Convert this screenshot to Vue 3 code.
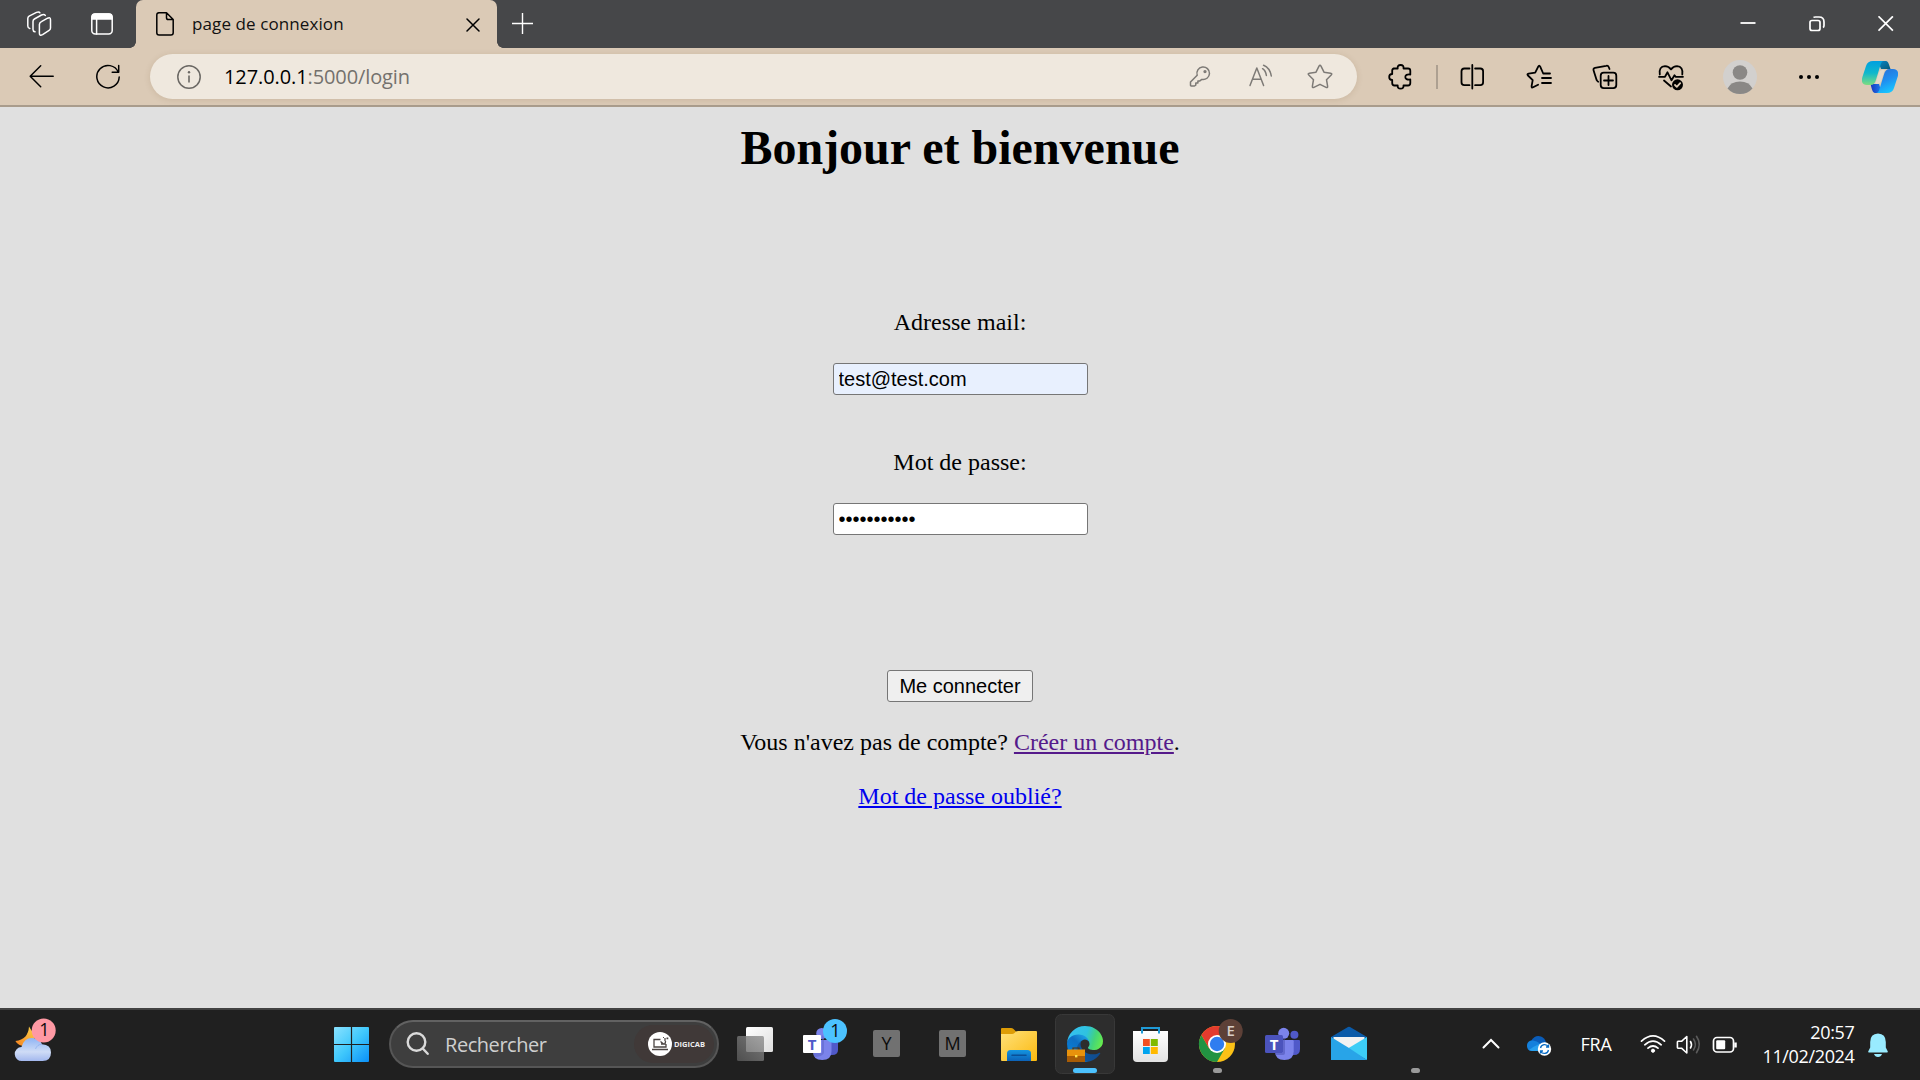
<script setup>
import { ref } from 'vue'

const email = ref('test@test.com')
const password = ref('motdepasse1')
</script>

<template>
  <div class="screen">
    <header class="tabstrip">
      <div class="slot ws">
        <svg width="26" height="26" viewBox="0 0 26 26" class="line light">
          <path d="M15.400 10.600 21.600 7.200q2.900-1.300 2.900 1.500V17q0 1.600-1.400 2.400l-6.500 4.300q-3.200 1.600-3.200-1.500v-8.600q0-2 2-3z" />
          <path d="M9 20.800q-2-.4-2-2.400v-8q0-1.600 1.400-2.400L15.500 4q2.600-1.200 3.800.4" />
          <path d="M3.800 17.400q-2-.5-2-2.500V7.500q0-1.500 1.300-2.300L10.500 1.400q2.600-1 3.400.4" />
        </svg>
      </div>
      <div class="slot ta">
        <svg width="24" height="24" viewBox="0 0 24 24" class="line light">
          <rect x="1.800" y="2" width="20.400" height="20" rx="3.500" />
          <path d="M2 4.500Q2.200 2 5 2h14q2.800 0 3 2.500V7H2z" fill="#fff" />
          <path d="M6.600 7v15" />
        </svg>
      </div>
      <div class="tab">
        <svg class="doc line dark" width="20" height="26" viewBox="0 0 20 26">
          <path d="M3.500 1.800h8L18.200 8.500v13.200q0 2.300-2.300 2.300H4.100q-2.300 0-2.300-2.300V4q0-2.200 2.200-2.200zM11.500 2v4.700q0 1.800 1.800 1.800H18" />
        </svg>
        <span class="tab-title">page de connexion</span>
        <svg class="line dark tab-close" width="14" height="14" viewBox="0 0 14 14"><path d="M1 1l12 12M13 1 1 13" /></svg>
      </div>
      <svg class="plus" width="22" height="22" viewBox="0 0 22 22"><path d="M10.500 0v21M0 10.500h21" stroke="#fff" stroke-width="1.400" /></svg>
      <div class="controls">
        <div><svg width="16" height="16" viewBox="0 0 16 16"><path d="M.5 7h15" stroke="#fff" stroke-width="1.800" /></svg></div>
        <div>
          <svg width="16" height="16" viewBox="0 0 16 16" fill="none" stroke="#fff" stroke-width="1.700">
            <rect x="1" y="4.500" width="10" height="10" rx="2" /><path d="M4.500 1.500Q5 1 6.500 1H10q5 0 5 5v3.500q0 1.500-1 2" />
          </svg>
        </div>
        <div><svg width="16" height="16" viewBox="0 0 16 16"><path d="M.5.300l14.400 14.400M14.900.300.5 14.700" stroke="#fff" stroke-width="1.700" /></svg></div>
      </div>
    </header>

    <nav class="toolbar">
      <div class="tool"><svg class="line dark" width="26" height="26" viewBox="0 0 26 26"><path d="M24.200 12.200H1.700M11.700 1.700 1.200 12.200l10.500 10.500" /></svg></div>
      <div class="tool">
        <svg class="line dark" width="26" height="26" viewBox="0 0 26 26"><path d="M23.300 8.200A11.200 11.200 0 1 0 24.200 13M23.700 1.500v6.700h-6.500" /></svg>
      </div>
      <div class="address">
        <svg class="info" width="26" height="26" viewBox="0 0 26 26">
          <circle cx="13" cy="13" r="11.200" fill="none" stroke="#6b6864" stroke-width="1.500" />
          <path d="M13 11.500v7" stroke="#6b6864" stroke-width="1.600" /><circle cx="13" cy="8.200" r="1.200" fill="#6b6864" />
        </svg>
        <span class="url">127.0.0.1<span class="path">:5000/login</span></span>
        <div class="address-tools">
          <div>
            <svg class="line grey" width="24" height="24" viewBox="0 0 24 24">
              <path d="M9.200 11.200a6.300 6.300 0 1 1 4.600 4.200l-1.900 1.500h-2v2.200H7.800v2L6.500 22H3.200q-.7 0-.7-.7v-3.200z" transform="translate(0 -1)" /><circle cx="17" cy="6.600" r=".9" />
            </svg>
          </div>
          <div>
            <svg class="line grey" width="26" height="26" viewBox="0 0 26 26">
              <path d="M3 21.500 9.800 4l6.800 17.500M5.600 15.200H14M15.600 4.700q3 1.900 3.800 6.800M16.600 1.300q6.400 2.700 7.700 10.700" />
            </svg>
          </div>
          <div>
            <svg class="line grey" width="26" height="26" viewBox="0 0 26 26">
              <path d="M12 2.100q1-1.800 2 0l3 6.100 6.600 1q2 .4.600 1.800l-4.700 4.700 1.100 6.500q.2 2-1.500 1.100L13 20.300l-6.100 3q-1.700.9-1.500-1.100l1.100-6.500-4.700-4.700q-1.400-1.400.6-1.800l6.600-1z" />
            </svg>
          </div>
        </div>
      </div>
      <div class="tool puzzle">
        <svg class="line dark thick" width="26" height="26" viewBox="0 0 26 26">
          <path d="M5.500 4.500h4.200q-.5-3.500 2.900-3.500t2.900 3.500H20q2.300 0 2.300 2.200v3.800q-5-.5-5 2.500t5 2.500V19q0 2.500-2.300 2.500h-4.500q.3 3.200-2.900 3.200t-2.900-3.200H6.500q-2.300 0-2.300-2.500v-3q-3 0-3-3t3-3V6.500q0-2 2.300-2" />
        </svg>
      </div>
      <i class="divider"></i>
      <div class="tool">
        <svg class="line dark thick" width="26" height="26" viewBox="0 0 26 26">
          <path d="M12.300 1v23.500M9.500 4.500H4.300q-2.800 0-2.800 2.800v11q0 2.900 2.800 2.900h5.200M15.100 4.500h5.200q2.800 0 2.800 2.800v11q0 2.900-2.800 2.900h-5.200" />
        </svg>
      </div>
      <div class="tool">
        <svg class="line dark thick" width="26" height="26" viewBox="0 0 26 26">
          <path d="M24.500 10h-6.800l-3-6.800q-1-2-2 0L9.700 9.200l-6.600 1q-2 .4-.6 1.800l4.700 4.700-1.100 6q-.2 2 1.500 1.100l5-2.600M16.500 14.500h9M16.500 19.500h9" transform="translate(-.5 -.5)" />
        </svg>
      </div>
      <div class="tool">
        <svg class="line dark thick" width="26" height="26" viewBox="0 0 26 26">
          <rect x="8.700" y="8.700" width="15.600" height="15.400" rx="3" /><path d="M16.500 12v9M12 16.500h9M17.500 5l-.8-2q-.7-1.700-2.500-1.200L3 3.900q-2 .5-1.400 2.500l3.100 9.800q.5 1 1.500 1.500" />
        </svg>
      </div>
      <div class="tool">
        <svg class="line dark thick" width="26" height="28" viewBox="0 0 26 28">
          <path d="M1.800 11.500Q.6 3.500 7 3.100q3.700 0 6 3.300 2.300-3.300 6-3.300 6.400.4 5.300 8.400M1 13.800h6l2.500-4.500 4 8 3-5 1.300 1.500H25M6 17.500l7 6" />
          <circle cx="19.500" cy="21.800" r="5.500" fill="#000" stroke="none" /><path class="tick" d="m17 22 1.800 1.800 3.400-3.600" />
        </svg>
      </div>
      <div class="tool avatar">
        <svg width="34" height="34" viewBox="0 0 34 34">
          <circle cx="17" cy="17" r="17" fill="#d2d0ce" /><circle cx="17" cy="12.500" r="7.300" fill="#8a8886" />
          <path d="M4.500 28.400Q8 21.500 17 21.500t12.500 6.900Q24.500 34 17 34T4.500 28.400z" fill="#8a8886" />
        </svg>
      </div>
      <div class="tool"><svg width="22" height="6" viewBox="0 0 22 6"><circle cx="3" cy="3" r="2" /><circle cx="11" cy="3" r="2" /><circle cx="19" cy="3" r="2" /></svg></div>
      <div class="tool copilot">
        <svg width="36" height="32" viewBox="0 0 36 32">
          <defs>
            <linearGradient id="cpA" x1="0" y1="0" x2="0" y2="1"><stop offset="0" stop-color="#009fe0" /><stop offset=".5" stop-color="#10b8cc" /><stop offset="1" stop-color="#7ddd80" /></linearGradient>
            <linearGradient id="cpB" x1=".2" y1="0" x2=".6" y2="1"><stop offset="0" stop-color="#2870d8" /><stop offset=".5" stop-color="#1f8ff0" /><stop offset="1" stop-color="#18c8ff" /></linearGradient>
            <linearGradient id="cpC" x1="0" y1="0" x2="1" y2="1"><stop offset="0" stop-color="#0a86c8" /><stop offset="1" stop-color="#075a78" /></linearGradient>
            <linearGradient id="cpD" x1="0" y1="0" x2="1" y2="0"><stop offset="0" stop-color="#1838c0" /><stop offset="1" stop-color="#1f80ee" /></linearGradient>
          </defs>
          <path d="M16 0h7c3 0 3.500 2 4.300 4.500L28.500 8H19z" fill="url(#cpC)" />
          <path d="M20 32h-6c-3 0-3.500-2-4.300-4.500L8.500 23H17z" fill="url(#cpD)" />
          <path d="M11 0h11c-2 0-3 2-3.500 4l-4.600 15c-.8 3-2.500 5-5.500 5H5c-4.500 0-6-3-4.600-8L4 5C5 1.500 7.500 0 11 0z" fill="url(#cpA)" />
          <path d="M25 32H14c2 0 3-2 3.500-4l4.600-15c.8-3 2.500-5 5.500-5H31c4.500 0 6 3 4.600 8L32 27c-1 3.500-3.500 5-7 5z" fill="url(#cpB)" />
          <path d="M20.500 9h2.200l-3.400 10.500q-1 3.500-4.500 3.500h-1.500l3.500-11q.9-3 3.700-3z" fill="#e6d9c8" />
        </svg>
      </div>
    </nav>

    <main class="page">
      <h1>Bonjour et bienvenue</h1>
      <form class="login" @submit.prevent>
        <label for="mail">Adresse mail:</label>
        <input id="mail" v-model="email" class="filled" type="text" />
        <label for="pass" class="second">Mot de passe:</label>
        <input id="pass" v-model="password" type="password" />
        <button type="submit">Me connecter</button>
      </form>
      <p>Vous n'avez pas de compte? <a class="visited" href="#">Créer un compte</a>.</p>
      <p><a href="#">Mot de passe oublié?</a></p>
    </main>

    <footer class="taskbar">
      <svg class="weather" width="66" height="70" viewBox="0 0 66 70">
        <defs>
          <linearGradient id="moon" x1="0" y1="1" x2="1" y2="0"><stop offset="0" stop-color="#f58220" /><stop offset="1" stop-color="#fcd34a" /></linearGradient>
          <linearGradient id="cloud" x1="0" y1="0" x2="0" y2="1"><stop offset="0" stop-color="#8fb4f4" /><stop offset=".6" stop-color="#cfdcf6" /><stop offset="1" stop-color="#a3b8ee" /></linearGradient>
        </defs>
        <path d="M29 16.500q-.8 13-13.600 14.500Q18 36 25 36q9 0 10-10z" fill="url(#moon)" />
        <path d="M22 51a7 7 0 0 1-.5-14Q24 28 32 28q7.500 0 10 6.200 9 .3 9 8.300 0 8.500-8.500 8.500z" fill="url(#cloud)" />
        <path d="M35.500 39q1.500-4.500 6.500-4.800" stroke="#83a6ec" fill="none" opacity=".6" />
        <circle cx="43.700" cy="20.500" r="12" fill="#ff99a4" /><text x="44.500" y="26" class="badge">1</text>
      </svg>
      <svg class="start" width="67" height="70" viewBox="0 0 67 70">
        <defs><linearGradient id="win" gradientUnits="userSpaceOnUse" x1="16" y1="17" x2="51" y2="52"><stop offset="0" stop-color="#8ae2ff" /><stop offset=".5" stop-color="#40c8fc" /><stop offset="1" stop-color="#0a90f8" /></linearGradient></defs>
        <path fill="url(#win)" d="M17 17h15.900v16.900H16V18q0-1 1-1zM34.100 17H50q1 0 1 1v15.900H34.100zM16 35.100h16.900V52H17q-1 0-1-1zM34.100 35.100H51V51q0 1-1 1H34.100z" />
      </svg>
      <div class="search">
        <svg width="24" height="26" viewBox="0 0 24 26" fill="none" stroke="#dadada" stroke-width="2.400" stroke-linecap="round"><circle cx="10.500" cy="11" r="8.800" /><path d="m17 17.800 4.700 5" /></svg>
        <span>Rechercher</span>
        <div class="brand">
          <svg width="24" height="24" viewBox="0 0 24 24">
            <circle cx="12" cy="12" r="12" fill="#fff" />
            <path d="M12.500 7.500H6v7.500h12v-3M4 17.500h16M12.500 9.500l3 2.500M17 6v3M13 12h4l.6-3" fill="none" stroke="#4b4543" stroke-width="1.300" /><path d="M18.500 5.500h1.800v1.800h-1.800zM15 5h1v1h-1z" fill="#4b4543" />
          </svg>
          <b>DIGICAB</b>
        </div>
      </div>

      <svg class="app first" width="66" height="70" viewBox="0 0 66 70">
        <defs>
          <linearGradient id="tv1" x1="0" y1="0" x2="1" y2="1"><stop offset="0" stop-color="#fff" /><stop offset="1" stop-color="#dedede" /></linearGradient>
          <linearGradient id="tv2" x1="1" y1="0" x2="0" y2="1"><stop offset="0" stop-color="#8f8f8f" /><stop offset="1" stop-color="#5a5a5a" /></linearGradient>
        </defs>
        <rect x="24" y="17" width="27" height="25" rx="1.500" fill="url(#tv1)" /><rect x="15" y="26" width="27" height="25" rx="1.500" fill="url(#tv2)" opacity=".8" />
      </svg>
      <svg class="app" width="66" height="70" viewBox="0 0 66 70">
        <circle cx="33.700" cy="23.500" r="5.500" fill="#7b83eb" />
        <path d="M40 31h10v9q0 5-6 5h-4z" fill="#5059c9" /><path d="M25 30h18.500v11.500q0 8.500-9.300 8.500T25 41.500z" fill="#7b83eb" />
        <path d="M34 25v18H26v4q8 0 10-4V27z" fill="#5a62c4" opacity=".5" />
        <rect x="15" y="25" width="18" height="18" rx="1" fill="#fff" /><text x="24" y="39.500" class="tee" fill="#5059c9">T</text>
        <circle cx="47" cy="21" r="12" fill="#4cc2ff" /><text x="47.500" y="27" class="badge">1</text>
      </svg>
      <svg v-for="l in ['Y', 'M']" :key="l" class="app" width="66" height="70" viewBox="0 0 66 70">
        <rect x="19" y="20" width="27" height="27" rx="2" fill="#717171" /><text x="32.500" y="40" class="badge">{{ l }}</text>
      </svg>
      <svg class="app" width="66" height="70" viewBox="0 0 66 70">
        <defs>
          <linearGradient id="fo" x1="0" y1="0" x2="1" y2="1"><stop offset="0" stop-color="#ffe17a" /><stop offset="1" stop-color="#fbb90f" /></linearGradient>
          <linearGradient id="fb" x1="0" y1="0" x2="0" y2="1"><stop offset="0" stop-color="#1495e0" /><stop offset="1" stop-color="#0c62b8" /></linearGradient>
        </defs>
        <path d="M16 18h9q1.500 0 2.500 1l3 3v4H15v-7q0-1 1-1z" fill="#dd9c06" />
        <path d="M15 24h11q1.500 0 2.500-1l1.500-1.500q1-.5 2-.5h18q1 0 1 1v28q0 1-1 1H16q-1 0-1-1z" fill="url(#fo)" />
        <path d="M21 51v-7.500q0-3.500 3.500-3.500h17q3.500 0 3.500 3.500V51z" fill="url(#fb)" /><path d="M26 45.300h14" stroke="#0a4f96" stroke-width="1.500" stroke-linecap="round" />
      </svg>
      <svg class="app" width="66" height="70" viewBox="0 0 66 70">
        <defs>
          <linearGradient id="e1" gradientUnits="userSpaceOnUse" x1="63" y1="178" x2="242" y2="178"><stop offset="0" stop-color="#0c59a4" /><stop offset="1" stop-color="#114a8b" /></linearGradient>
          <linearGradient id="e2" gradientUnits="userSpaceOnUse" x1="158" y1="104" x2="46" y2="226"><stop offset="0" stop-color="#1b9de2" /><stop offset=".4" stop-color="#0f6fc4" /><stop offset="1" stop-color="#0680d7" /></linearGradient>
          <linearGradient id="e3" gradientUnits="userSpaceOnUse" x1="10" y1="60" x2="250" y2="140"><stop offset="0" stop-color="#35c1f1" /><stop offset=".5" stop-color="#2fc2df" /><stop offset=".75" stop-color="#43d47b" /><stop offset="1" stop-color="#66eb4e" /></linearGradient>
        </defs>
        <rect x="3.500" y="4.500" width="59" height="59" rx="6" fill="#2d2d2d" stroke="#383838" />
        <g transform="translate(15 16) scale(.1406) translate(-4.630 -4.920)">
          <path fill="url(#e1)" d="M235.680 195.460a93.730 93.730 0 0 1-10.540 4.710 101.870 101.870 0 0 1-35.900 6.460c-47.320 0-88.540-32.550-88.540-74.320A31.480 31.480 0 0 1 117.130 105c-42.800 1.800-53.800 46.400-53.800 72.530 0 73.880 68.090 81.370 82.760 81.370 7.910 0 19.840-2.300 27-4.560l1.310-.44a128.340 128.340 0 0 0 66.600-52.800 4 4 0 0 0-5.320-5.640z" />
          <path fill="url(#e2)" d="M110.340 246.340A79.200 79.200 0 0 1 87.600 225a80.720 80.720 0 0 1 29.530-120c3.120-1.470 8.450-4.130 15.540-4a32.350 32.350 0 0 1 25.690 13 31.880 31.880 0 0 1 6.360 18.660c0-.21 24.460-79.600-80-79.600-43.900 0-80 41.660-80 78.210a130.150 130.150 0 0 0 12.110 56 128 128 0 0 0 156.380 67.110 75.550 75.550 0 0 1-62.780-8z" />
          <path fill="url(#e3)" d="M156.940 153.780c-.81 1.050-3.300 2.500-3.300 5.660 0 2.610 1.700 5.120 4.720 7.230 14.380 10 41.490 8.680 41.560 8.680a59.560 59.560 0 0 0 30.270-8.350 61.380 61.380 0 0 0 30.430-52.880c.26-22.410-8-37.310-11.340-43.910C228.090 28.760 182.350 4.920 132.610 4.920a128 128 0 0 0-128 126.200c.48-36.540 36.800-66.050 80-66.050 3.500 0 23.460.34 42 10.070 16.340 8.580 24.900 18.940 30.850 29.210 6.180 10.670 7.280 24.150 7.280 29.520s-2.740 13.330-7.800 19.910z" />
        </g>
        <path d="M21 40v-2h6v2" fill="none" stroke="#5b3206" stroke-width="1.200" /><path d="M15 39.500h18V46H15z" fill="#e8920c" /><path d="M15 46h18v6H15z" fill="#a85c06" /><rect x="23" y="45" width="2.400" height="2.400" fill="#ffe14a" />
        <rect x="21" y="58" width="24" height="5" rx="2.500" fill="#4cc2ff" />
      </svg>
      <svg class="app" width="66" height="70" viewBox="0 0 66 70">
        <defs><linearGradient id="bag" x1="0" y1="0" x2="0" y2="1"><stop offset="0" stop-color="#fff" /><stop offset="1" stop-color="#e2e2e2" /></linearGradient></defs>
        <path d="M15 21h35v27q0 4-4 4H19q-4 0-4-4z" fill="url(#bag)" /><path d="M24 23.500V18h17v5.500" fill="none" stroke="#1f9ad6" stroke-width="2" />
        <path d="M25 29h6.800v7H25z" fill="#f25022" /><path d="M32.800 29h7v7h-7z" fill="#7fba00" /><path d="M25 37h6.800v7H25z" fill="#00a4ef" /><path d="M32.800 37h7v7h-7z" fill="#ffb900" />
      </svg>
      <svg class="app" width="66" height="70" viewBox="0 0 66 70">
        <circle cx="33" cy="34" r="18" fill="#fbc116" />
        <path d="M33 34 17.400 25A18 18 0 0 1 48.600 25H33z" fill="#e33b2e" />
        <path d="M17.400 25A18 18 0 0 0 33 52l7.800-13.500L33 34l-7.800 4.500z" fill="#229342" />
        <path d="M17.400 25 25.200 38.500 33 34V25z" fill="#e33b2e" />
        <circle cx="33" cy="34" r="9" fill="#fff" /><circle cx="33" cy="34" r="7.200" fill="#2f7df0" />
        <circle cx="46.700" cy="21" r="12" fill="#5d4037" /><text x="46.700" y="26.200" class="ebadge">E</text>
        <rect x="29" y="58" width="9" height="5" rx="2.500" fill="#9a9a9a" />
      </svg>
      <svg class="app" width="66" height="70" viewBox="0 0 66 70">
        <circle cx="44.400" cy="24.700" r="4" fill="#5059c9" /><circle cx="33.700" cy="23.300" r="5.500" fill="#7b83eb" />
        <path d="M40 30h9q1 0 1 1v8q0 6-6 6h-4z" fill="#5059c9" /><path d="M25 30h17.500q1.200 0 1.200 1.200v10q0 8.800-9.300 8.800T25 41.200z" fill="#7b83eb" />
        <path d="M33 28h2v15q0 2-2 2h-7.500v-2H33z" fill="#4a50b0" opacity=".5" />
        <rect x="15" y="25" width="18" height="18" rx="1.500" fill="#4b53bc" /><text x="24" y="39.500" class="tee" fill="#fff">T</text>
      </svg>
      <svg class="app" width="66" height="70" viewBox="0 0 66 70">
        <path d="m15 27 17-10q1-.6 2 0l17 10v9H15z" fill="#0a5aa8" /><path d="M17.500 27h31v6L33 40l-15.500-7z" fill="#f2f2f2" />
        <path d="M51 27v23L31 39z" fill="#3ccdf6" /><path d="M15 27v23h36L33 38z" fill="#28a4e8" />
      </svg>
      <svg class="app" width="66" height="70" viewBox="0 0 66 70"><rect x="29" y="58" width="9" height="5" rx="2.500" fill="#9a9a9a" /></svg>

      <div class="tray">
        <svg class="chev" width="66" height="20" viewBox="0 0 66 20"><path d="m25.500 12.500 7.500-7.500 7.500 7.500" fill="none" stroke="#fff" stroke-width="2" stroke-linecap="round" /></svg>
        <svg class="cloud" width="30" height="30" viewBox="0 0 30 30">
          <path d="M7 11q4-6.500 10-4.500 4 1.500 5 6l-9 6z" fill="#0a5cb8" /><path d="M7.500 21q-5-.5-4.500-6 .7-5 6-4.500 4 .5 7 3l5 7.500z" fill="#1480dc" /><path d="M5 20q9-7 17-7.500l2 8.500H8z" fill="#28a0ee" />
          <circle cx="20.500" cy="19" r="6.700" fill="#fff" /><path d="M16.500 18a4.200 4.200 0 0 1 7.800-1.200M24.500 20a4.200 4.200 0 0 1-7.800 1.200M24.500 14.500V17H22M16.500 23.500V21H19" fill="none" stroke="#0a6cc4" stroke-width="1.300" />
        </svg>
        <span class="lang">FRA</span>
        <div class="status">
          <svg width="36" height="24" viewBox="0 0 36 24" fill="none" stroke="#fff" stroke-width="1.700" stroke-linecap="round">
            <path d="M6.500 8.200q11.500-10.500 23 0M9.800 11.800q8.200-7.400 16.400 0M13 15.200q5-4.400 10 0" /><circle cx="18" cy="17.700" r="1.600" fill="#fff" stroke-width="1" />
          </svg>
          <svg width="36" height="24" viewBox="0 0 36 24" fill="none" stroke="#fff" stroke-width="1.600" stroke-linecap="round">
            <path d="M7 8.300h3.500L15.800 3.500V20l-5.300-4.800H7q-.6 0-.6-.6V9q0-.7.6-.7zM19.500 8.500q2 3.200 0 6.500" stroke-linejoin="round" /><path d="M22.500 6q3.800 5.500 0 11M25.500 3.300q5.500 8.200 0 16.400" stroke="#5c5c5c" />
          </svg>
          <svg width="36" height="24" viewBox="0 0 36 24" fill="none" stroke="#fff" stroke-width="1.700"><rect x="6.500" y="4.500" width="20" height="14.500" rx="3.500" /><rect x="9.200" y="7.300" width="9" height="9" rx="1" fill="#fff" stroke="none" /><path d="M28.500 9.500v5" stroke-width="2.500" /></svg>
        </div>
        <div class="clock"><div>20:57</div><div>11/02/2024</div></div>
        <svg class="bell" width="30" height="30" viewBox="0 0 30 30" fill="#99ebff"><path d="M15 3.500q7.800.4 7.800 8.500v5.500l2 4q.3 1-.8 1H6q-1.100 0-.8-1l2-4V12q0-8.100 7.800-8.500zM11 24h8q-1 3-4 3t-4-3z" /></svg>
      </div>
    </footer>
  </div>
</template>

<style>
body { margin: 0; overflow: hidden; }
</style>

<style scoped>
.screen { width: 1920px; height: 1080px; display: flex; flex-direction: column; overflow: hidden; font-family: "Open Sans", "Noto Sans", sans-serif; background: #e0e0e0; }
svg { display: block; flex: none; }
.line { fill: none; stroke-width: 1.5; stroke-linecap: round; stroke-linejoin: round; }
.thick { stroke-width: 1.8; }
.light { stroke: #fff; }
.dark { stroke: #000; }
.grey { stroke: #7d7a76; }
.tick { stroke: #dbcab6; }

.tabstrip { box-sizing: border-box; height: 48px; display: flex; align-items: center; padding-left: 7px; background: #464749; }
.slot { display: flex; justify-content: center; }
.ws { width: 64px; }
.ta { width: 62px; margin-right: 3px; }
.tab { position: relative; box-sizing: border-box; width: 361px; height: 48px; display: flex; align-items: center; padding: 0 17px 0 19px; background: #dbcab6; border-radius: 7px 7px 0 0; }
.tab::before, .tab::after { content: ""; position: absolute; bottom: 0; width: 6px; height: 6px; }
.tab::before { left: -6px; background: radial-gradient(circle at 0 0, transparent 5.5px, #dbcab6 6px); }
.tab::after { right: -6px; background: radial-gradient(circle at 100% 0, transparent 5.5px, #dbcab6 6px); }
.tab-title { margin-left: 17px; font-size: 17px; line-height: 24px; letter-spacing: 0.1px; white-space: nowrap; color: #111; }
.tab-close { margin: 2px 0 0 auto; }
.plus { margin-left: 15px; }
.controls { margin-left: auto; display: flex; }
.controls div { width: 69px; display: flex; justify-content: center; }

.toolbar { box-sizing: border-box; height: 59px; display: flex; align-items: center; padding-left: 9px; background: #dbcab6; border-bottom: 2px solid #a99c8c; }
.tool { width: 66px; display: flex; justify-content: center; }
.address { width: 1207px; height: 45px; margin: 0 0 0 9px; box-sizing: border-box; padding: 0 7px 0 26px; display: flex; align-items: center; border-radius: 23px; background: #efe8de; box-shadow: 0 1px 6px rgba(90, 60, 20, .13); }
.url { margin-left: 22px; font-size: 20px; line-height: 28px; letter-spacing: -0.1px; white-space: nowrap; color: #000; }
.url .path { color: #74716d; }
.address-tools { margin-left: auto; display: flex; align-items: center; }
.address-tools div { width: 60px; display: flex; justify-content: center; }
.puzzle { margin-left: 11px; }
.divider { width: 2px; height: 24px; margin: 0 2px; background: #ada091; }
.avatar { width: 72px; }
.copilot { width: 76px; }

.page { box-sizing: border-box; height: 901px; padding-top: 13px; display: flex; flex-direction: column; align-items: center; font-family: "Liberation Serif", "Times New Roman", serif; font-size: 24px; line-height: 28px; color: #000; background: #e0e0e0; }
h1 { margin: 0; font-size: 48px; line-height: 56px; font-weight: bold; }
.login { display: flex; flex-direction: column; align-items: center; margin-top: 132px; }
.second { margin-top: 53px; }
input { box-sizing: border-box; width: 255px; height: 32px; margin: 27px 0 0; padding: 0 5px; border: 1px solid #767676; border-radius: 3px; outline: 0; font: 20px/28px "Liberation Sans", Arial, sans-serif; color: #000; background: #fff; }
.filled { background: #e8f0fe; }
button { box-sizing: border-box; width: 146px; height: 32px; margin: 135px 0 0; padding: 0; border: 1px solid #767676; border-radius: 3px; font: 20px/28px "Liberation Sans", Arial, sans-serif; color: #000; background: #efefef; }
p { margin: 26px 0 0; }
a { color: #00e; text-decoration: underline; }
.visited { color: #551a8b; }

.taskbar { box-sizing: border-box; height: 72px; display: flex; align-items: center; border-top: 2px solid #424242; background: #202020; color: #fff; }
.start { margin-left: 252px; }
.search { box-sizing: border-box; width: 330px; height: 48px; margin: -2px 3px 0 4px; padding: 0 3px 0 15px; display: flex; align-items: center; border: 2px solid #565656; border-top-color: #626262; border-radius: 24px; background: #3e3e3e; }
.search span { margin: 2px 0 0 15px; font-size: 20px; line-height: 28px; letter-spacing: -0.45px; color: #cfcfcf; }
.brand { margin-left: auto; width: 80px; height: 38px; box-sizing: border-box; padding-left: 14px; display: flex; align-items: center; gap: 2px; border-radius: 19px; background: #403938; }
.brand b { font-size: 7.5px; line-height: 10px; color: #eee; }
.badge { font: 18px "Open Sans", sans-serif; text-anchor: middle; fill: #0c0c0c; }
.ebadge { font: 600 15px "Open Sans", sans-serif; text-anchor: middle; fill: #d9cdc8; }
.tee { font: bold 15px "Open Sans", sans-serif; text-anchor: middle; }
.tray { display: flex; align-items: center; flex: 1; margin-left: 10px; }
.lang { width: 66px; margin: -2px 0 0 9px; text-align: center; font-size: 18px; line-height: 24px; letter-spacing: -0.2px; }
.status { display: flex; margin-left: 6px; }
.clock { width: 111.500px; margin-top: -3px; text-align: right; font-size: 18px; line-height: 24px; letter-spacing: -0.35px; }
.bell { margin-left: 8.500px; }
</style>
